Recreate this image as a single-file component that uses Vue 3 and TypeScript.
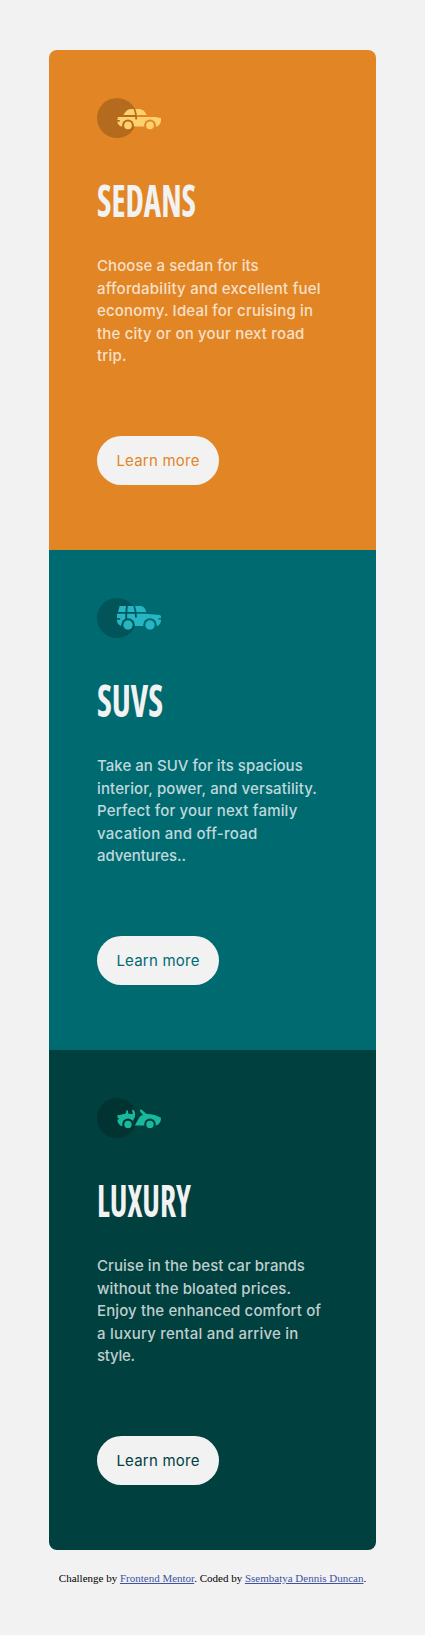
<script setup lang="ts">
interface Line {
  text: string
  tracking: number
}

interface Card {
  kind: 'sedan' | 'suv' | 'luxury'
  title: string
  titleWidth: number
  wheelY: number
  wheelRadius: number
  lines: Line[]
}

const cards: Card[] = [
  {
    kind: 'sedan',
    title: 'SEDANS',
    titleWidth: 99,
    wheelY: 27.4,
    wheelRadius: 3.8,
    lines: [
      { text: 'Choose a sedan for its', tracking: 0.07 },
      { text: 'affordability and excellent fuel', tracking: 0.23 },
      { text: 'economy. Ideal for cruising in', tracking: 0.17 },
      { text: 'the city or on your next road', tracking: 0.18 },
      { text: 'trip.', tracking: 0.2 },
    ],
  },
  {
    kind: 'suv',
    title: 'SUVS',
    titleWidth: 66,
    wheelY: 27,
    wheelRadius: 4.7,
    lines: [
      { text: 'Take an SUV for its spacious', tracking: 0.04 },
      { text: 'interior, power, and versatility.', tracking: 0.13 },
      { text: 'Perfect for your next family', tracking: 0.18 },
      { text: 'vacation and off-road', tracking: 0.26 },
      { text: 'adventures..', tracking: -0.06 },
    ],
  },
  {
    kind: 'luxury',
    title: 'LUXURY',
    titleWidth: 94,
    wheelY: 26.4,
    wheelRadius: 3.7,
    lines: [
      { text: 'Cruise in the best car brands', tracking: 0.05 },
      { text: 'without the bloated prices.', tracking: 0.1 },
      { text: 'Enjoy the enhanced comfort of', tracking: 0.12 },
      { text: 'a luxury rental and arrive in', tracking: 0.22 },
      { text: 'style.', tracking: -0.26 },
    ],
  },
]
</script>

<template>
  <div class="page">
    <main class="cards">
      <section v-for="card in cards" :key="card.kind" class="card" :class="card.kind">
        <svg class="icon" width="64" height="40" viewBox="0 0 64 40" aria-hidden="true">
          <defs>
            <mask :id="`gaps-${card.kind}`" maskUnits="userSpaceOnUse" x="0" y="0" width="64" height="40">
              <rect width="64" height="40" fill="#fff" />
              <circle cx="31" :cy="card.wheelY" :r="card.wheelRadius + 2.1" />
              <circle cx="53" :cy="card.wheelY" :r="card.wheelRadius + 2.1" />
              <g fill="none" stroke="#000" stroke-width="1.8">
                <path v-if="card.kind === 'sedan'" d="M37 10C38.6 13 39.2 16 39.2 21.6M19 22.8h3.8" />
                <template v-if="card.kind === 'suv'">
                  <path d="M30.2 7C29.4 10 29.2 14 29.2 22M37 7C38.4 11 39 14 39 19.5" />
                  <path d="M19 21h4.2M61.5 21H65" stroke-width="1.5" />
                </template>
                <path v-if="card.kind === 'luxury'" d="M19 20.8h2.8" stroke-width="1.2" />
              </g>
            </mask>
          </defs>
          <circle cx="20" cy="20" r="20" fill="#000" fill-opacity=".2" />
          <g class="car">
            <g :mask="`url(#gaps-${card.kind})`">
              <template v-if="card.kind === 'sedan'">
                <path d="M26.4 17C28.5 13.2 30.8 11 34 11h7.4c4.2 0 6.6 2.2 8.1 6Z" />
                <path d="M20.6 19h34.2c3.5 0 6.3.4 9.2 1.1v1.8c0 2.8-1.6 5.4-4.2 6.6H24.6C22 27.8 20.3 25.6 20.3 23v-1.8c.7 0 .7-1.4.3-2.2Z" />
              </template>
              <template v-else-if="card.kind === 'suv'">
                <path d="M22.6 8H43c3.5 0 5.4 2.2 6.2 6H21Z" />
                <path d="M20 15.8h28.2l14.3 1.1c.9.1 1.5.6 1.5 1.5v4.2c0 2.4-1.4 4.2-3.5 5.4H24.2C21.5 27 20 25.3 20 22.8Z" />
              </template>
              <template v-else>
                <path d="M20 17.6l7-1.5c1.1-.2 2-.8 2.1-1.7v-1.6c.5-.9 1.7-.8 2 .1v2.7c1.3.7 4 .6 4.8-.1l-.8-2.4c-.1-1.3 1.5-1.7 2.1-.7 1.5 2.8 1.3 7.2-1 9.6v6h-12C22 26.6 20 24 20.6 21.4c.5-1 .2-2-.6-3.8Z" />
                <path d="M43.2 13.4c-.8-1.1.7-2.5 1.8-1.5l4.5 4.2c6 .1 10.4 1.5 14.4 3.7.4 3.2-1.3 6.5-4.8 7.8H37.8l4.5-8.1c.7-1.2 1.7-2 3.6-2.5Z" />
              </template>
            </g>
            <circle cx="31" :cy="card.wheelY" :r="card.wheelRadius" />
            <circle cx="53" :cy="card.wheelY" :r="card.wheelRadius" />
          </g>
        </svg>
        <h2 class="title">
          <svg width="200" height="70" viewBox="0 0 200 70">
            <text x="0" y="52" :textLength="card.titleWidth" lengthAdjust="spacingAndGlyphs">{{ card.title }}</text>
          </svg>
        </h2>
        <p class="copy">
          <span v-for="line in card.lines" :key="line.text" class="line" :style="{ letterSpacing: `${line.tracking}px` }">{{ line.text }}</span>
        </p>
        <button class="more" type="button">Learn more</button>
      </section>
    </main>
    <footer class="credit">
      Challenge by <a href="#">Frontend Mentor</a>. Coded by <a href="#">Ssembatya Dennis Duncan</a>.
    </footer>
  </div>
</template>

<style>
body {
  background: #f2f2f2;
}
</style>

<style scoped>
.page {
  box-sizing: border-box;
  min-height: 1635px;
  padding: 50px 49px 0;
  background: #f2f2f2;
}

.cards {
  width: 327px;
  overflow: hidden;
  border-radius: 8px;
}

.card {
  box-sizing: border-box;
  display: flex;
  flex-direction: column;
  align-items: flex-start;
  height: 500px;
  padding: 48px;
}

.sedan {
  color: #e28625;
  background: #e28625;
}

.suv {
  color: #006a71;
  background: #006a71;
}

.luxury {
  color: #00403e;
  background: #00403e;
}

.icon,
.title svg {
  display: block;
}

.sedan .car {
  fill: #ffd16e;
}

.suv .car {
  fill: #26b6c3;
}

.luxury .car {
  fill: #19b99d;
}

.title {
  height: 70px;
  margin: 27px 0 20px;
}

.title text {
  fill: #f2f2f2;
  font-family: "Open Sans", sans-serif;
  font-size: 45px;
  font-stretch: 75%;
  font-weight: 700;
}

.copy {
  margin: 0;
  color: rgba(255, 255, 255, 0.75);
  font: 450 15px/22.5px Inter, "Open Sans", sans-serif;
}

.line {
  display: block;
  white-space: nowrap;
}

.more {
  width: 122px;
  height: 49px;
  margin: 68px 0 0;
  padding: 1px 0 0;
  border: 0;
  border-radius: 25px;
  color: inherit;
  background: #f2f2f2;
  font: 400 15px/20px Inter, "Open Sans", sans-serif;
  letter-spacing: 0.22px;
}

.credit {
  margin-top: 21px;
  color: #000;
  font: 11px/14px "Liberation Serif", serif;
  text-align: center;
  white-space: nowrap;
}

.credit a {
  color: #3e52a3;
}
</style>
